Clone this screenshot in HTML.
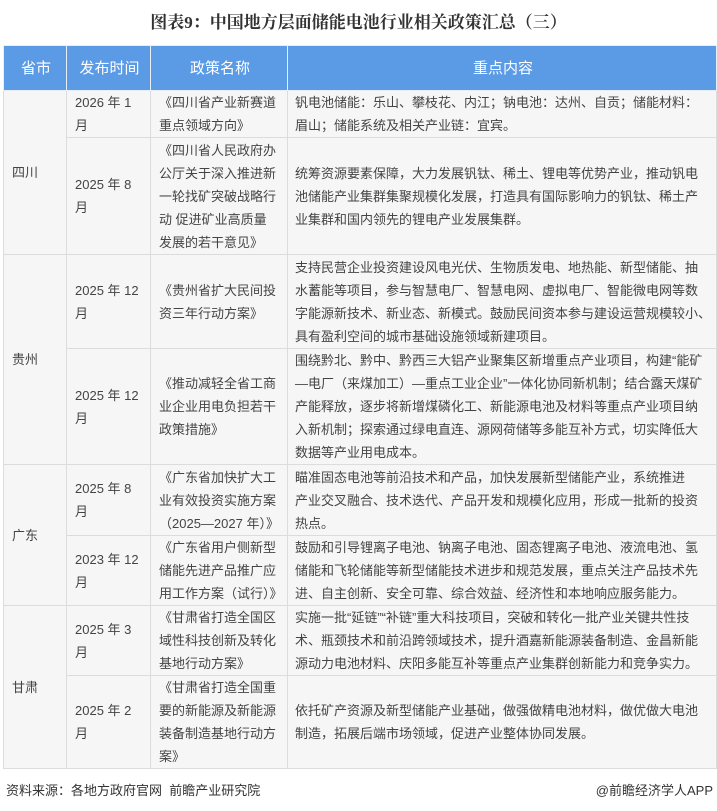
<!DOCTYPE html>
<html><head><meta charset="utf-8"><style>
*{margin:0;padding:0;box-sizing:border-box}
body{width:717px;height:811px;background:#fff;font-family:"Liberation Sans","Noto Sans CJK SC",sans-serif;color:#444;position:relative;overflow:hidden}
h1{position:absolute;top:8px;left:0;width:717px;text-align:center;font-size:17px;font-weight:bold;color:#333;font-family:"Liberation Serif","Noto Serif CJK SC",serif}
table{position:absolute;top:45px;left:3px;width:714px;border-collapse:collapse;table-layout:fixed}
td,th{border:1px solid #dcdcdc;font-size:13px;line-height:23px;vertical-align:middle;text-align:left;padding:0 6px 0 8px;background:#f6f6f6;font-weight:normal;white-space:nowrap;overflow:hidden}
th{background:#5b9be6;color:#fff;font-size:15px;text-align:center;height:45px;border-color:#e8eef8}
td.p{padding-left:8px}
td.c{padding-left:7px;padding-right:2px}
.f{position:absolute;top:780px;font-size:13px;color:#333}
</style></head><body>
<h1>图表9：中国地方层面储能电池行业相关政策汇总（三）</h1>
<table>
<colgroup><col style="width:63px"><col style="width:84px"><col style="width:137px"><col></colgroup>
<tr><th>省市</th><th>发布时间</th><th>政策名称</th><th>重点内容</th></tr>
<tr style="height:47px"><td class="p" rowspan="2">四川</td><td>2026 年 1<br>月</td><td>《四川省产业新赛道<br>重点领域方向》</td><td class="c">钒电池储能：乐山、攀枝花、内江；钠电池：达州、自贡；储能材料：<br>眉山；储能系统及相关产业链：宜宾。</td></tr>
<tr style="height:117px"><td>2025 年 8<br>月</td><td>《四川省人民政府办<br>公厅关于深入推进新<br>一轮找矿突破战略行<br>动 促进矿业高质量<br>发展的若干意见》</td><td class="c">统筹资源要素保障，大力发展钒钛、稀土、锂电等优势产业，推动钒电<br>池储能产业集群集聚规模化发展，打造具有国际影响力的钒钛、稀土产<br>业集群和国内领先的锂电产业发展集群。</td></tr>
<tr style="height:94px"><td class="p" rowspan="2">贵州</td><td>2025 年 12<br>月</td><td>《贵州省扩大民间投<br>资三年行动方案》</td><td class="c">支持民营企业投资建设风电光伏、生物质发电、地热能、新型储能、抽<br>水蓄能等项目，参与智慧电厂、智慧电网、虚拟电厂、智能微电网等数<br>字能源新技术、新业态、新模式。鼓励民间资本参与建设运营规模较小、<br>具有盈利空间的城市基础设施领域新建项目。</td></tr>
<tr style="height:116px"><td>2025 年 12<br>月</td><td>《推动减轻全省工商<br>业企业用电负担若干<br>政策措施》</td><td class="c">围绕黔北、黔中、黔西三大铝产业聚集区新增重点产业项目，构建“能矿<br>—电厂（来煤加工）—重点工业企业”一体化协同新机制；结合露天煤矿<br>产能释放，逐步将新增煤磷化工、新能源电池及材料等重点产业项目纳<br>入新机制；探索通过绿电直连、源网荷储等多能互补方式，切实降低大<br>数据等产业用电成本。</td></tr>
<tr style="height:71px"><td class="p" rowspan="2">广东</td><td>2025 年 8<br>月</td><td>《广东省加快扩大工<br>业有效投资实施方案<br>（2025—2027 年）》</td><td class="c">瞄准固态电池等前沿技术和产品，加快发展新型储能产业，系统推进<br>产业交叉融合、技术迭代、产品开发和规模化应用，形成一批新的投资<br>热点。</td></tr>
<tr style="height:70px"><td>2023 年 12<br>月</td><td>《广东省用户侧新型<br>储能先进产品推广应<br>用工作方案（试行）》</td><td class="c">鼓励和引导锂离子电池、钠离子电池、固态锂离子电池、液流电池、氢<br>储能和飞轮储能等新型储能技术进步和规范发展，重点关注产品技术先<br>进、自主创新、安全可靠、综合效益、经济性和本地响应服务能力。</td></tr>
<tr style="height:70px"><td class="p" rowspan="2">甘肃</td><td>2025 年 3<br>月</td><td>《甘肃省打造全国区<br>域性科技创新及转化<br>基地行动方案》</td><td class="c">实施一批“延链”“补链”重大科技项目，突破和转化一批产业关键共性技<br>术、瓶颈技术和前沿跨领域技术，提升酒嘉新能源装备制造、金昌新能<br>源动力电池材料、庆阳多能互补等重点产业集群创新能力和竞争实力。</td></tr>
<tr style="height:93px"><td>2025 年 2<br>月</td><td>《甘肃省打造全国重<br>要的新能源及新能源<br>装备制造基地行动方<br>案》</td><td class="c">依托矿产资源及新型储能产业基础，做强做精电池材料，做优做大电池<br>制造，拓展后端市场领域，促进产业整体协同发展。</td></tr>
</table>
<div class="f" style="left:6px">资料来源：各地方政府官网&nbsp; 前瞻产业研究院</div>
<div class="f" style="right:4px">@前瞻经济学人APP</div>
</body></html>
